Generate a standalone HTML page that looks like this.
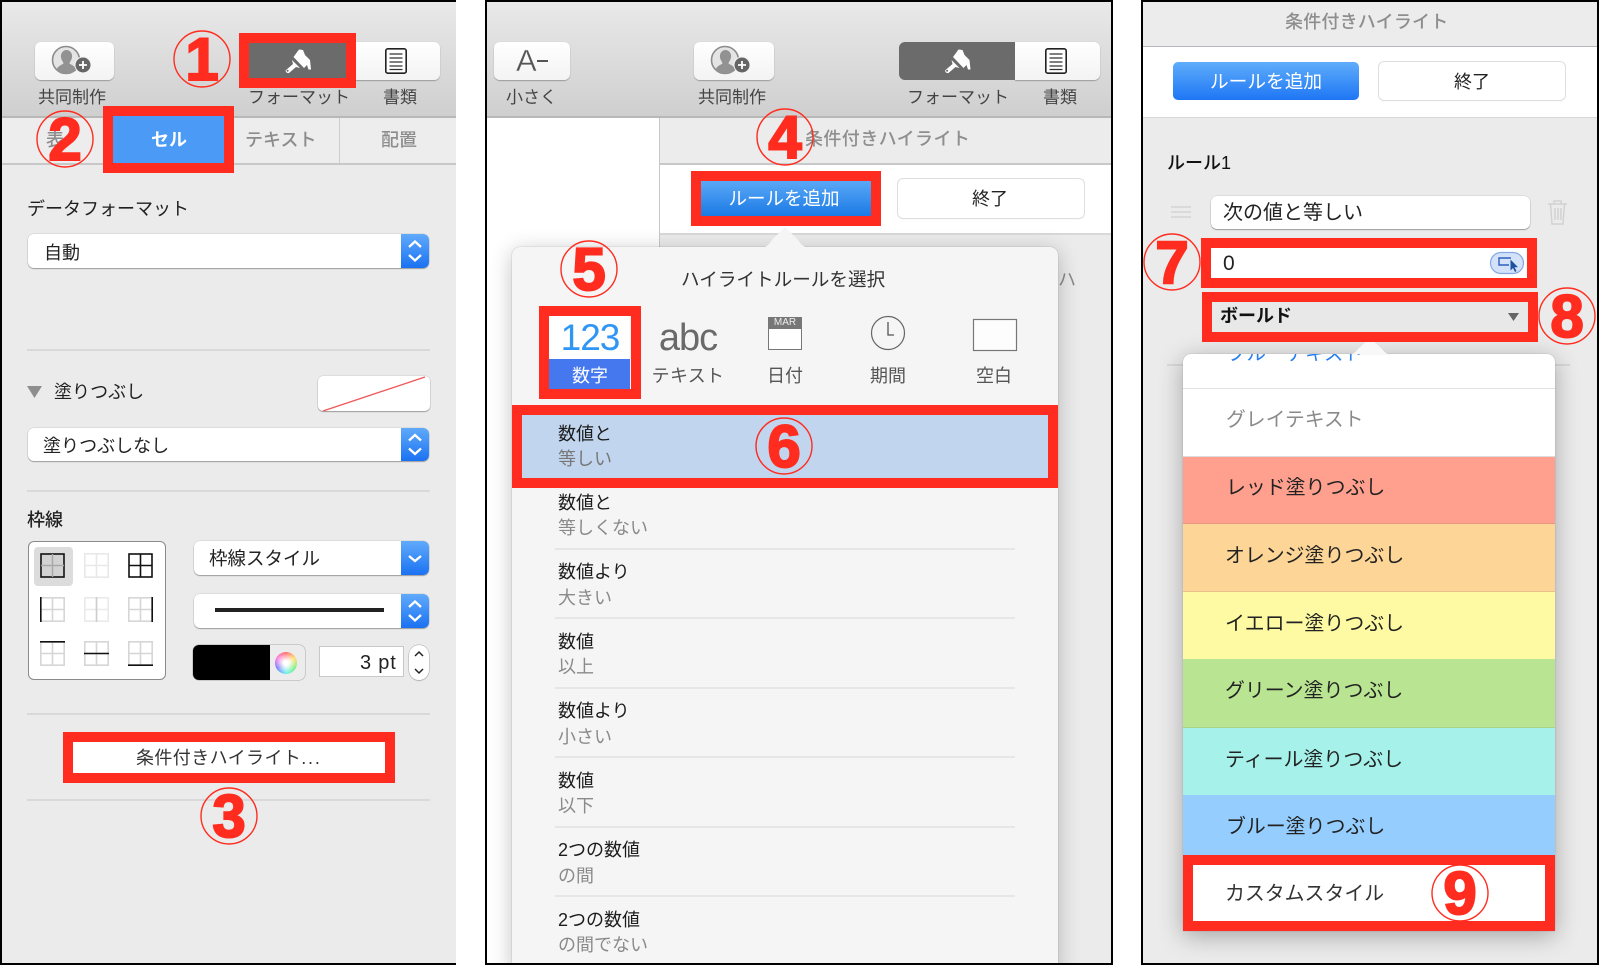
<!DOCTYPE html>
<html lang="ja"><head><meta charset="utf-8"><title>条件付きハイライト</title>
<style>
html,body{margin:0;padding:0;background:#fff}
#page{position:relative;width:1600px;height:965px;overflow:hidden;background:#fff;font-family:"Liberation Sans","Noto Sans CJK JP",sans-serif;color:#222}
.p{position:absolute;left:0;top:0;width:1600px;height:965px}
.a{position:absolute}
.t{position:absolute;white-space:nowrap;line-height:0;font-size:18px;margin-top:1px}
.c{transform:translateX(-50%)}
.bar{position:absolute;top:2px;height:114px;background:linear-gradient(#e9e9e9,#cfcfcf);border-bottom:2px solid #b8b8b8;box-sizing:content-box}
.btn{position:absolute;box-sizing:border-box;background:linear-gradient(#fff,#f3f3f3);border-radius:6px;box-shadow:0 1px 1px rgba(0,0,0,.28),0 0 0 .5px #d6d6d6}
.lab{font-size:17px;color:#444}
.rb{position:absolute;box-sizing:border-box;border:10px solid #ff2c1f}
.sel{position:absolute;box-sizing:border-box;background:#fff;border-radius:6px;box-shadow:0 1px 1px rgba(0,0,0,.3),0 0 0 .5px #cfcfcf;overflow:hidden}
.sel i{position:absolute;right:0;top:0;bottom:0;width:28px;background:linear-gradient(#60aafb,#1b72f2)}
.hr{position:absolute;height:2px;background:#d9d9d9}
.dv{position:absolute;left:555px;width:460px;height:2px;background:#e6e6e6}
.pri{color:#1c1c1c}.sec{color:#8a8a8a}
.gbtn{position:absolute;box-sizing:border-box;background:#fff;border-radius:5px;box-shadow:0 0 0 1px #dedede,0 1px 1px rgba(0,0,0,.12)}
.sw{position:absolute;left:1183px;width:372px}
svg{position:absolute;left:0;top:0;overflow:visible}
</style></head><body><div id="page">
<svg width="0" height="0" style="position:absolute"><defs>
<symbol id="person" overflow="visible"><circle cx="16" cy="22" r="13.5" fill="#e4e4e4" stroke="#8c8c8c" stroke-width="1.6"/><path d="M6.5 32c1-4 5-5 7-6.5 0-1.500-2-3-2.500-6-.7-4 2-7.500 5.500-7.500s6.200 3.500 5.500 7.500c-.5 3-2.500 4.500-2.500 6 2 1.500 6 2.500 7 6.500-2.500 2.500-6 3.500-10 3.500s-7.500-1-10-3.500z" fill="#929292"/><circle cx="33" cy="27" r="8.500" fill="#f4f4f4"/><circle cx="33" cy="27" r="7.500" fill="#666"/><path d="M33 23v8M29 27h8" stroke="#fff" stroke-width="1.800"/></symbol>
<symbol id="brush" overflow="visible"><path d="M18.500 17 24 9.500 28 10 30 15 35 20 36 29.500 33.500 29.500 32 25 29 28z" fill="#fff"/><path d="M17 20 25 28 21 27 14 33Q11 33.500 10.500 30.500L18 24z" fill="#fff"/><circle cx="12.600" cy="30.800" r="1" fill="#666"/></symbol>
<symbol id="doc" overflow="visible"><rect x=".8" y=".8" width="20.400" height="24.400" rx="2" fill="#fff" stroke="#222" stroke-width="1.600"/><path d="M4.500 6h13M4.500 10h13M4.500 14h13M4.500 18h13M4.500 21.500h13" stroke="#333" stroke-width="1.300"/></symbol>
<symbol id="ud" overflow="visible"><path d="M-6 -4 0 -9.500 6 -4M-6 4 0 9.500 6 4" fill="none" stroke="#fff" stroke-width="2.300"/></symbol>
<symbol id="grid" overflow="visible"><rect x=".8" y=".8" width="23.400" height="23.400" fill="none" stroke="#d6d6d6" stroke-width="1.600"/><path d="M12.500 1v23M1 12.500h23" stroke="#d6d6d6" stroke-width="1.600"/></symbol>
</defs></svg>

<!-- PANEL 1 -->
<div class="p" style="clip-path:inset(0 1144px 0 0)">
<div class="a" style="left:0;top:0;width:458px;height:965px;background:#ebebeb"></div>
<div class="bar" style="left:2px;width:454px"></div>
<div class="a" style="left:2px;top:118px;width:454px;height:45px;background:#ededed;border-bottom:2px solid #c8c8c8"></div>
<div class="a" style="left:339px;top:118px;width:1px;height:45px;background:#cdcdcd"></div>
<div class="btn" style="left:35px;top:42px;width:79px;height:38px"></div>
<div class="btn" style="left:346px;top:42px;width:94px;height:38px;border-radius:0 6px 6px 0"></div>
<svg width="1" height="1"><use href="#person" x="50" y="38" width="60" height="45"/><use href="#doc" x="385" y="48" width="22" height="26"/></svg>
<div class="t lab" style="left:38px;top:97px">共同制作</div>
<div class="t lab" style="left:248px;top:97px">フォーマット</div>
<div class="t lab" style="left:383px;top:97px">書類</div>
<div class="t" style="left:46px;top:139px;color:#8c8c8c;font-weight:500">表</div>
<div class="t" style="left:245px;top:139px;color:#8c8c8c;font-weight:500">テキスト</div>
<div class="t" style="left:381px;top:139px;color:#8c8c8c;font-weight:500">配置</div>
<div class="a" style="left:113px;top:116px;width:111px;height:47px;background:#4a9af6"></div>
<div class="t c" style="left:169px;top:139px;color:#fff;font-weight:700">セル</div>
<div class="a" style="left:249px;top:43px;width:97px;height:35px;background:#6b6b6b"></div>
<svg width="1" height="1"><use href="#brush" x="275" y="40" width="60" height="40"/></svg>
<div class="rb" style="left:239px;top:33px;width:117px;height:55px"></div>
<div class="rb" style="left:103px;top:106px;width:131px;height:67px"></div>

<div class="t" style="left:27px;top:208px;color:#1e1e1e">データフォーマット</div>
<div class="sel" style="left:28px;top:234px;width:401px;height:34px"><i></i></div>
<svg width="1" height="1"><use href="#ud" x="415" y="251" width="1" height="1"/></svg>
<div class="t" style="left:44px;top:252px">自動</div>
<div class="hr" style="left:27px;top:349px;width:403px"></div>
<svg width="1" height="1"><path d="M27 386h15l-7.500 12z" fill="#8e8e8e"/></svg>
<div class="t" style="left:54px;top:391px">塗りつぶし</div>
<div class="sel" style="left:318px;top:376px;width:112px;height:35px;border-radius:5px"></div>
<svg width="1" height="1"><path d="M323 411 425 377" stroke="#ef5555" stroke-width="1.300"/></svg>
<div class="sel" style="left:28px;top:428px;width:401px;height:33px"><i></i></div>
<svg width="1" height="1"><use href="#ud" x="415" y="444.500" width="1" height="1"/></svg>
<div class="t" style="left:43px;top:445px">塗りつぶしなし</div>
<div class="hr" style="left:27px;top:490px;width:403px"></div>
<div class="t" style="left:27px;top:519px;font-weight:500">枠線</div>
<div class="a" style="left:28px;top:541px;width:136px;height:137px;background:#fff;border:1.500px solid #8a8a8a;border-radius:6px"></div>
<div class="a" style="left:34px;top:547px;width:39px;height:39px;background:#dcdcdc;border-radius:4px"></div>
<svg width="1" height="1">
<rect x="41" y="554" width="23" height="23" fill="#d2d2d2" stroke="#111" stroke-width="1.600"/><path d="M52.500 554v23M41 565.500h23" stroke="#a8a8a8" stroke-width="1.500"/>
<g opacity=".55"><use href="#grid" x="84" y="553" width="25" height="25"/></g>
<rect x="129" y="554" width="23" height="23" fill="none" stroke="#111" stroke-width="1.600"/><path d="M140.500 554v23M129 565.500h23" stroke="#111" stroke-width="1.600"/>
<use href="#grid" x="40" y="597" width="25" height="25"/><path d="M40.800 597v25" stroke="#111" stroke-width="1.600"/>
<g opacity=".5"><use href="#grid" x="84" y="597" width="25" height="25"/></g><path d="M96.500 597v25" stroke="#ccc" stroke-width="1.500"/>
<use href="#grid" x="128" y="597" width="25" height="25"/><path d="M152.200 597v25" stroke="#111" stroke-width="1.600"/>
<use href="#grid" x="40" y="641" width="25" height="25"/><path d="M40 641.800h25" stroke="#111" stroke-width="1.600"/>
<use href="#grid" x="84" y="641" width="25" height="25"/><path d="M84 653.500h25" stroke="#111" stroke-width="1.600"/>
<use href="#grid" x="128" y="641" width="25" height="25"/><path d="M128 665.200h25" stroke="#111" stroke-width="1.600"/>
</svg>
<div class="sel" style="left:194px;top:541px;width:235px;height:34px"><i></i></div>
<svg width="1" height="1"><path d="M409 556l6 5 6-5" fill="none" stroke="#fff" stroke-width="2.300"/></svg>
<div class="t" style="left:209px;top:558px;font-size:18.500px">枠線スタイル</div>
<div class="sel" style="left:194px;top:594px;width:235px;height:34px"><i></i></div>
<svg width="1" height="1"><use href="#ud" x="415" y="611" width="1" height="1"/></svg>
<div class="a" style="left:215px;top:608px;width:169px;height:4px;background:#222"></div>
<div class="a" style="left:193px;top:645px;width:112px;height:35px;background:#ececec;border-radius:6px;box-shadow:0 0 0 .5px #aaa;overflow:hidden"><div class="a" style="left:0;top:0;width:77px;height:35px;background:#000"></div></div>
<div class="a" style="left:275px;top:652px;width:22px;height:22px;border-radius:50%;background:radial-gradient(circle,#fff 15%,rgba(255,255,255,0) 70%),conic-gradient(#f66,#fd6,#7e7,#6ee,#77f,#f7d,#f66)"></div>
<div class="a" style="left:319px;top:646px;width:85px;height:31px;box-sizing:border-box;background:#fff;border:1px solid #c8c8c8"></div>
<div class="t" style="left:360px;top:662px;font-size:20px;letter-spacing:.8px">3 pt</div>
<div class="a" style="left:409px;top:645px;width:20px;height:35px;box-sizing:border-box;background:#fff;border-radius:10px;box-shadow:0 0 0 .5px #aaa,0 1px 1px rgba(0,0,0,.2)"></div>
<svg width="1" height="1"><path d="M415 656l4-4 4 4M415 669l4 4 4-4" fill="none" stroke="#222" stroke-width="1.500"/></svg>
<div class="hr" style="left:27px;top:713px;width:403px"></div>
<div class="a" style="left:73px;top:742px;width:312px;height:31px;background:#fff"></div>
<div class="t" style="left:136px;top:757px;letter-spacing:.4px;color:#333">条件付きハイライト<span style="letter-spacing:1.800px">...</span></div>
<div class="rb" style="left:63px;top:732px;width:332px;height:51px"></div>
<div class="hr" style="left:27px;top:799px;width:403px"></div>
<div class="a" style="left:0;top:0;width:458px;height:965px;box-sizing:border-box;border:2px solid #000"></div>
</div>

<!-- PANEL 2 -->
<div class="p" style="clip-path:inset(0 487px 0 485px)">
<div class="a" style="left:485px;top:0;width:628px;height:965px;background:#ebebeb"></div>
<div class="bar" style="left:487px;width:624px"></div>
<div class="a" style="left:487px;top:118px;width:172px;height:847px;background:#fff;border-right:1px solid #c8c8c8"></div>
<div class="a" style="left:660px;top:118px;width:451px;height:45px;background:#ececec;border-bottom:2px solid #c8c8c8"></div>
<div class="a" style="left:660px;top:165px;width:451px;height:68px;background:#fff;border-bottom:2px solid #d8d8d8"></div>
<div class="btn" style="left:494px;top:42px;width:76px;height:38px"></div>
<div class="btn" style="left:694px;top:42px;width:80px;height:38px"></div>
<div class="btn" style="left:1015px;top:42px;width:85px;height:38px;border-radius:0 6px 6px 0"></div>
<div class="a" style="left:899px;top:42px;width:116px;height:38px;background:#6b6b6b;border-radius:6px 0 0 6px"></div>
<svg width="1" height="1"><use href="#person" x="709" y="38" width="60" height="45"/><use href="#brush" x="934.500" y="40" width="60" height="40"/><use href="#doc" x="1045" y="48" width="22" height="26"/></svg>
<div class="t" style="left:516px;top:60px;font-size:31px;color:#555;-webkit-text-stroke:.4px #ececec">A</div>
<div class="a" style="left:537px;top:60px;width:11px;height:1.500px;background:#555"></div>
<div class="t lab" style="left:506px;top:97px">小さく</div>
<div class="t lab" style="left:698px;top:97px">共同制作</div>
<div class="t lab" style="left:907px;top:97px">フォーマット</div>
<div class="t lab" style="left:1043px;top:97px">書類</div>
<div class="t" style="left:805px;top:138px;color:#8e8e8e;font-weight:500;letter-spacing:.4px">条件付きハイライト</div>
<div class="a" style="left:701px;top:181px;width:170px;height:35px;background:linear-gradient(#5ba8f7,#1a7ae4)"></div>
<div class="t" style="left:728.500px;top:198px;color:#fff;font-size:18.500px">ルールを追加</div>
<div class="rb" style="left:691px;top:171px;width:189.500px;height:55px"></div>
<div class="gbtn" style="left:898px;top:179px;width:186px;height:39px"></div>
<div class="t c" style="left:990px;top:198px">終了</div>
<div class="t" style="left:1058px;top:279px;color:#8a8a8a">ハ</div>
<div class="a" style="left:512px;top:247px;width:546px;height:730px;background:#f5f5f5;border-radius:8px;box-shadow:0 0 1px rgba(0,0,0,.35),0 4px 22px rgba(0,0,0,.24)"></div>
<svg width="1" height="1"><path d="M759 248c6 0 9-2 13-8l13-13 13 13c4 6 7 8 13 8z" fill="#f5f5f5"/></svg>
<div class="t" style="left:681px;top:279px;font-size:18.600px;color:#333">ハイライトルールを選択</div>
<div class="a" style="left:549px;top:316px;width:81px;height:43px;background:#fff"></div>
<div class="a" style="left:549px;top:359px;width:81px;height:30px;background:#4578ee"></div>
<div class="t c" style="left:590px;top:337px;font-size:37px;letter-spacing:-1px;color:#2f96f6">123</div>
<div class="t c" style="left:590px;top:375px;color:#fff">数字</div>
<div class="rb" style="left:539px;top:306px;width:102px;height:93px"></div>
<div class="t c" style="left:688px;top:337px;font-size:38px;letter-spacing:-1px;color:#6a6a6a">abc</div>
<div class="t c" style="left:688px;top:375px;color:#555;letter-spacing:.3px">テキスト</div>
<div class="t c" style="left:785px;top:375px;color:#555">日付</div>
<div class="t c" style="left:888px;top:375px;color:#555">期間</div>
<div class="t c" style="left:994px;top:375px;color:#555">空白</div>
<svg width="1" height="1"><rect x="768.500" y="317.500" width="33" height="32" fill="#fff" stroke="#777"/><rect x="768" y="317" width="34" height="12" fill="#777"/>
<circle cx="888" cy="333" r="16.500" fill="none" stroke="#666" stroke-width="1.200"/><path d="M888 322v13h6" fill="none" stroke="#555" stroke-width="1.300"/>
<rect x="973.500" y="319.500" width="43" height="31" fill="#fdfdfd" stroke="#777" stroke-width="1.200"/></svg>
<div class="t c" style="left:785px;top:322px;font-size:10px;color:#eee">MAR</div>
<div class="a" style="left:522px;top:415px;width:526px;height:63px;background:#c1d5ee"></div>
<div class="rb" style="left:512px;top:405px;width:546px;height:83px"></div>
<div class="t pri" style="left:558px;top:433px">数値と</div><div class="t sec" style="left:558px;top:458px;color:#777">等しい</div>
<div class="t pri" style="left:558px;top:502px">数値と</div><div class="t sec" style="left:558px;top:527px">等しくない</div>
<div class="dv" style="top:548px"></div>
<div class="t pri" style="left:558px;top:571px">数値より</div><div class="t sec" style="left:558px;top:597px">大きい</div>
<div class="dv" style="top:617px"></div>
<div class="t pri" style="left:558px;top:641px">数値</div><div class="t sec" style="left:558px;top:666px">以上</div>
<div class="dv" style="top:687px"></div>
<div class="t pri" style="left:558px;top:710px">数値より</div><div class="t sec" style="left:558px;top:736px">小さい</div>
<div class="dv" style="top:756px"></div>
<div class="t pri" style="left:558px;top:780px">数値</div><div class="t sec" style="left:558px;top:805px">以下</div>
<div class="dv" style="top:826px"></div>
<div class="t pri" style="left:558px;top:849px">2つの数値</div><div class="t sec" style="left:558px;top:875px">の間</div>
<div class="dv" style="top:895px"></div>
<div class="t pri" style="left:558px;top:919px">2つの数値</div><div class="t sec" style="left:558px;top:944px">の間でない</div>
<div class="a" style="left:485px;top:0;width:628px;height:965px;box-sizing:border-box;border:2px solid #000"></div>
</div>

<!-- PANEL 3 -->
<div class="p" style="clip-path:inset(0 0 0 1141px)">
<div class="a" style="left:1141px;top:0;width:458px;height:965px;background:#ebebeb"></div>
<div class="a" style="left:1143px;top:2px;width:454px;height:44px;background:#ececec;border-bottom:1px solid #b4b8bc"></div>
<div class="t" style="left:1285px;top:21px;color:#8e8e8e;font-weight:500;letter-spacing:.2px">条件付きハイライト</div>
<div class="a" style="left:1143px;top:47px;width:454px;height:70px;background:#fff;border-bottom:1px solid #d8d8d8"></div>
<div class="a" style="left:1173px;top:62px;width:186px;height:38px;border-radius:5px;background:linear-gradient(#5fadfb,#1e76f4)"></div>
<div class="t" style="left:1210px;top:81px;color:#fff;font-size:18.700px">ルールを追加</div>
<div class="gbtn" style="left:1379px;top:62px;width:186px;height:38px"></div>
<div class="t c" style="left:1472px;top:81px">終了</div>
<div class="t" style="left:1167px;top:162px;font-weight:500;color:#111">ルール1</div>
<svg width="1" height="1"><path d="M1171 207h20M1171 212h20M1171 217h20" stroke="#cfcfcf" stroke-width="1.300"/>
<g fill="none" stroke="#d2d2d2" stroke-width="1.500"><path d="M1548 204h19M1554 204v-3h7v3M1550.500 204l1.500 20h11l1.500-20M1555 208v12M1558 208v12M1561 208v12"/></g></svg>
<div class="sel" style="left:1211px;top:196px;width:319px;height:33px"></div>
<div class="t" style="left:1223px;top:212px;font-size:20px">次の値と等しい</div>
<div class="a" style="left:1211px;top:248px;width:316px;height:30px;background:#fff"></div>
<div class="t" style="left:1223px;top:263px;font-size:21px">0</div>
<svg width="1" height="1"><rect x="1490.500" y="252.500" width="33" height="21" rx="10.500" fill="#d3e2f8" stroke="#84a8e6" stroke-width="1.200"/><path d="M1511 258h-12v7h10" fill="none" stroke="#2c5fc0" stroke-width="1.400"/><path d="M1510.500 259.500v11l2.500-2.500 2 4 1.500-1-2-3.800h3.500z" fill="#1f4f9e"/></svg>
<div class="rb" style="left:1201px;top:238px;width:336px;height:50px"></div>
<div class="hr" style="left:1167px;top:364px;width:403px"></div>
<div class="a" style="left:1183px;top:354px;width:372px;height:577px;background:#fff;border-radius:8px 8px 0 0;box-shadow:0 0 1px rgba(0,0,0,.3),0 5px 24px rgba(0,0,0,.3)"></div>
<svg width="1" height="1"><path d="M1346 355c6 0 9-2 12-6l12-11 12 11c3 4 6 6 12 6z" fill="#f8f8f8"/></svg>
<div class="a" style="left:1183px;top:354px;width:372px;height:34px;overflow:hidden"><div class="t" style="left:44px;top:-1px;font-size:19.500px;color:#2a7ff0">ブルーテキスト</div></div>
<div class="a" style="left:1183px;top:388px;width:372px;height:1px;background:#e2e2e2"></div>
<div class="t" style="left:1226px;top:419px;font-size:19.800px;color:#8a8a8a">グレイテキスト</div>
<div class="sw" style="top:456px;height:68px;background:#ffa08f;border-top:1px solid #ddd;box-sizing:border-box;border-bottom:1px solid #ec9485"></div>
<div class="sw" style="top:524px;height:68px;background:#fdd596;box-sizing:border-box;border-bottom:1px solid #e8c08a"></div>
<div class="sw" style="top:592px;height:67px;background:#fdfaa3"></div>
<div class="sw" style="top:659px;height:69px;background:#b9e593;box-sizing:border-box;border-bottom:1px solid #a9d488"></div>
<div class="sw" style="top:728px;height:67px;background:#a6f2ea"></div>
<div class="sw" style="top:795px;height:60px;background:#95cefe"></div>
<div class="t" style="left:1226px;top:487px;font-size:19.900px">レッド塗りつぶし</div>
<div class="t" style="left:1225px;top:555px;font-size:19.900px">オレンジ塗りつぶし</div>
<div class="t" style="left:1225px;top:623px;font-size:19.900px">イエロー塗りつぶし</div>
<div class="t" style="left:1225px;top:690px;font-size:19.900px">グリーン塗りつぶし</div>
<div class="t" style="left:1225px;top:759px;font-size:19.900px">ティール塗りつぶし</div>
<div class="t" style="left:1226px;top:826px;font-size:19.900px">ブルー塗りつぶし</div>
<div class="a" style="left:1193px;top:865px;width:352px;height:56.500px;background:#fff"></div>
<div class="t" style="left:1225px;top:893px;font-size:19.900px;color:#333">カスタムスタイル</div>
<div class="rb" style="left:1183px;top:855px;width:372px;height:76px"></div>
<div class="a" style="left:1212px;top:302px;width:316px;height:30px;background:#e8e8e8"></div>
<div class="t" style="left:1220px;top:315px;font-weight:700;font-size:18px;color:#111">ボールド</div>
<svg width="1" height="1"><path d="M1508 313h11l-5.500 8z" fill="#666"/></svg>
<div class="rb" style="left:1202px;top:292px;width:336px;height:50px"></div>
<div class="a" style="left:1141px;top:0;width:458px;height:965px;box-sizing:border-box;border:2px solid #000"></div>
</div>

<!-- NUMBERS -->
<svg width="1600" height="965" style="pointer-events:none">
<g fill="none" stroke="#ff2c1f" stroke-width="1.400">
<circle cx="202" cy="59" r="28"/><circle cx="65" cy="139" r="28"/><circle cx="229" cy="816" r="28"/><circle cx="785" cy="137" r="28"/><circle cx="589" cy="269" r="28"/><circle cx="784" cy="446" r="28"/><circle cx="1172" cy="262" r="28"/><circle cx="1567" cy="316" r="28"/><circle cx="1460" cy="893" r="28"/></g>
<g font-family="'Liberation Sans',sans-serif" font-weight="700" font-size="60" fill="#ff2c1f" stroke="#ff2c1f" stroke-width="2" text-anchor="middle">
<text x="202" y="80">1</text><text x="65" y="160">2</text><text x="229" y="837">3</text><text x="785" y="158">4</text><text x="589" y="290">5</text><text x="784" y="467">6</text><text x="1172" y="283">7</text><text x="1567" y="337">8</text><text x="1460" y="914">9</text></g>
</svg>
</div></body></html>
